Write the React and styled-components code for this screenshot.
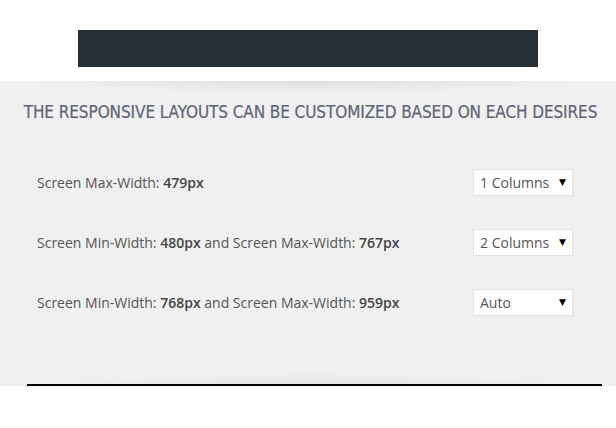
import React from 'react'
import styled, { createGlobalStyle } from 'styled-components'

const GlobalStyle = createGlobalStyle`
  html, body {
    margin: 0;
    padding: 0;
    background: #fff;
  }
`

const Page = styled.div`
  width: 616px;
  height: 428px;
  background: #fff;
  overflow: hidden;
`

const TopBand = styled.div`
  height: 81px;
  display: flex;
  justify-content: center;
  padding-top: 30px;
  box-sizing: border-box;
`

const DarkBar = styled.div`
  width: 460px;
  height: 37px;
  background: #262f35;
`

const Panel = styled.div`
  position: relative;
  height: 305px;
  background: #f0f0f0;
  box-sizing: border-box;
  padding: 19px 43px 0 37px;

  &::before {
    content: '';
    position: absolute;
    left: 30px;
    right: 30px;
    top: 0;
    height: 12px;
    background: radial-gradient(ellipse 50% 100% at 50% 0%, rgba(0, 0, 0, 0.07) 0%, rgba(0, 0, 0, 0) 100%);
  }

  &::after {
    content: '';
    position: absolute;
    left: 27px;
    right: 14px;
    bottom: 0;
    height: 2px;
    background: #000;
  }
`

const BottomShade = styled.div`
  position: absolute;
  left: 40px;
  right: 30px;
  bottom: 2px;
  height: 12px;
  background: radial-gradient(ellipse 50% 100% at 50% 100%, rgba(0, 0, 0, 0.05) 0%, rgba(0, 0, 0, 0) 100%);
`

const Heading = styled.h2`
  margin: 0 -43px 0 -37px;
  padding-left: 5px;
  text-align: center;
  font-family: 'DejaVu Sans Condensed', 'DejaVu Sans', sans-serif;
  font-weight: normal;
  font-size: 17px;
  line-height: 24px;
  letter-spacing: -0.08px;
  color: #5f6476;
  -webkit-text-stroke: 0.2px #5f6476;
`

const Rows = styled.div`
  display: flex;
  flex-direction: column;
  gap: 34px;
  margin-top: 45px;
`

const Row = styled.div`
  display: flex;
  justify-content: space-between;
  align-items: center;
  height: 26px;
`

const Label = styled.div`
  font-family: 'Open Sans', sans-serif;
  font-size: 14px;
  color: #555;

  b {
    font-weight: 600;
    color: #444;
  }
`

const Select = styled.div`
  width: 100px;
  height: 27px;
  box-sizing: border-box;
  background: #fff;
  border: 1px solid #e2e2e2;
  display: flex;
  align-items: center;
  justify-content: space-between;
  padding: 0 6px 0 6px;
  font-family: 'Open Sans', sans-serif;
  font-size: 14px;
  color: #555;
`

const Arrow = styled.span`
  font-family: 'DejaVu Sans', sans-serif;
  font-size: 9px;
  color: #000;
`

const rows = [
  { label: <>Screen Max-Width: <b>479px</b></>, value: '1 Columns' },
  { label: <>Screen Min-Width: <b>480px</b> and Screen Max-Width: <b>767px</b></>, value: '2 Columns' },
  { label: <>Screen Min-Width: <b>768px</b> and Screen Max-Width: <b>959px</b></>, value: 'Auto' },
]

export default function App() {
  return (
    <Page>
      <GlobalStyle />
      <TopBand>
        <DarkBar />
      </TopBand>
      <Panel>
        <Heading>THE RESPONSIVE LAYOUTS CAN BE CUSTOMIZED BASED ON EACH DESIRES</Heading>
        <Rows>
          {rows.map((r, i) => (
            <Row key={i}>
              <Label>{r.label}</Label>
              <Select>
                {r.value}
                <Arrow>▼</Arrow>
              </Select>
            </Row>
          ))}
        </Rows>
        <BottomShade />
      </Panel>
    </Page>
  )
}
